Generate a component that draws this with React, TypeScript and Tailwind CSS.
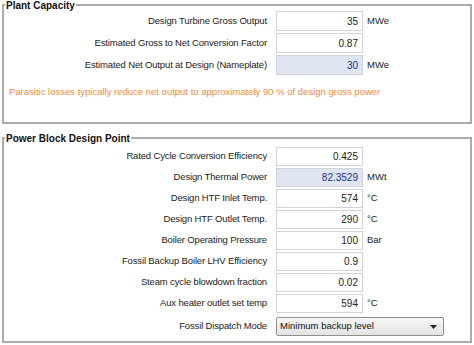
// SAM 式のパネル — Plant Capacity / Power Block Design Point

type Row = {
  label: string;
  value: string;
  unit?: string;
  calc?: boolean;
};

const CAPACITY_ROWS: Row[] = [
  { label: 'Design Turbine Gross Output', value: '35', unit: 'MWe' },
  { label: 'Estimated Gross to Net Conversion Factor', value: '0.87' },
  { label: 'Estimated Net Output at Design (Nameplate)', value: '30', unit: 'MWe', calc: true },
];

const POWER_BLOCK_ROWS: Row[] = [
  { label: 'Rated Cycle Conversion Efficiency', value: '0.425' },
  { label: 'Design Thermal Power', value: '82.3529', unit: 'MWt', calc: true },
  { label: 'Design HTF Inlet Temp.', value: '574', unit: '°C' },
  { label: 'Design HTF Outlet Temp.', value: '290', unit: '°C' },
  { label: 'Boiler Operating Pressure', value: '100', unit: 'Bar' },
  { label: 'Fossil Backup Boiler LHV Efficiency', value: '0.9' },
  { label: 'Steam cycle blowdown fraction', value: '0.02' },
  { label: 'Aux heater outlet set temp', value: '594', unit: '°C' },
];

const FONT = "font-['Liberation_Sans',Arial,sans-serif]";

const Group = ({ title, className, children }: {
  title: string;
  className: string;
  children: React.ReactNode;
}) => (
  <section className={`mx-[2px] border-2 border-[#ababab] ${className}`}>
    {/* タイトルは枠線の上に重ねる */}
    <div className="flex h-0 ml-[1px]">
      <span className="-mt-[6px] h-[12px] bg-white pl-[1px] pr-[1px] text-[10px] leading-[12px] font-bold text-[#111] whitespace-nowrap">
        {title}
      </span>
    </div>
    {children}
  </section>
);

const FieldRow = ({ row, h }: { row: Row; h: string }) => (
  <div className={`flex items-center ${h}`}>
    <div className="w-[264px] pr-[1px] text-right text-[9.5px] tracking-[-0.15px] text-[#222] whitespace-nowrap">
      {row.label}
    </div>
    <div
      className={`ml-[8px] w-[87px] h-full flex items-center justify-end pr-[4px] border border-[#d0d4da] text-[10px] ${
        row.calc ? 'bg-[#dfe5f1] text-[#23318c]' : 'bg-white text-[#222]'
      }`}
    >
      {row.value}
    </div>
    {row.unit && (
      <span className="ml-[4px] text-[9.5px] text-[#222]">{row.unit}</span>
    )}
  </div>
);

const App = () => (
  <div className={`w-[474px] h-[345px] bg-white pt-[4px] ${FONT}`}>
    <Group title="Plant Capacity" className="h-[120px]">
      <div className="flex flex-col gap-[2px] pt-[5px]">
        {CAPACITY_ROWS.map((r) => (
          <FieldRow key={r.label} row={r} h="h-[20px]" />
        ))}
      </div>
      <p className="mt-[10px] ml-[5px] text-[9.5px] text-[#ef8a3c] whitespace-nowrap">
        Parasitic losses typically reduce net output to approximately 90 % of design gross power
      </p>
    </Group>

    <Group title="Power Block Design Point" className="mt-[13px] h-[206px]">
      <div className="flex flex-col gap-[2px] pt-[8px]">
        {POWER_BLOCK_ROWS.map((r) => (
          <FieldRow key={r.label} row={r} h="h-[19px]" />
        ))}
      </div>
      {/* ドロップダウン */}
      <div className="flex items-center h-[19px] mt-[4px]">
        <div className="w-[264px] pr-[1px] text-right text-[9.5px] tracking-[-0.15px] text-[#222]">
          Fossil Dispatch Mode
        </div>
        <div className="ml-[8px] w-[168px] h-full flex items-center justify-between pl-[3px] pr-[6px] rounded-[2px] border border-[#8e8f8f] bg-gradient-to-b from-[#f7f7f7] to-[#e3e3e3] text-[9.5px] text-[#111]">
          <span>Minimum backup level</span>
          <svg width="7" height="4" viewBox="0 0 7 4">
            <path d="M0 0h7L3.5 4z" fill="#222" />
          </svg>
        </div>
      </div>
    </Group>
  </div>
);

export default App;
